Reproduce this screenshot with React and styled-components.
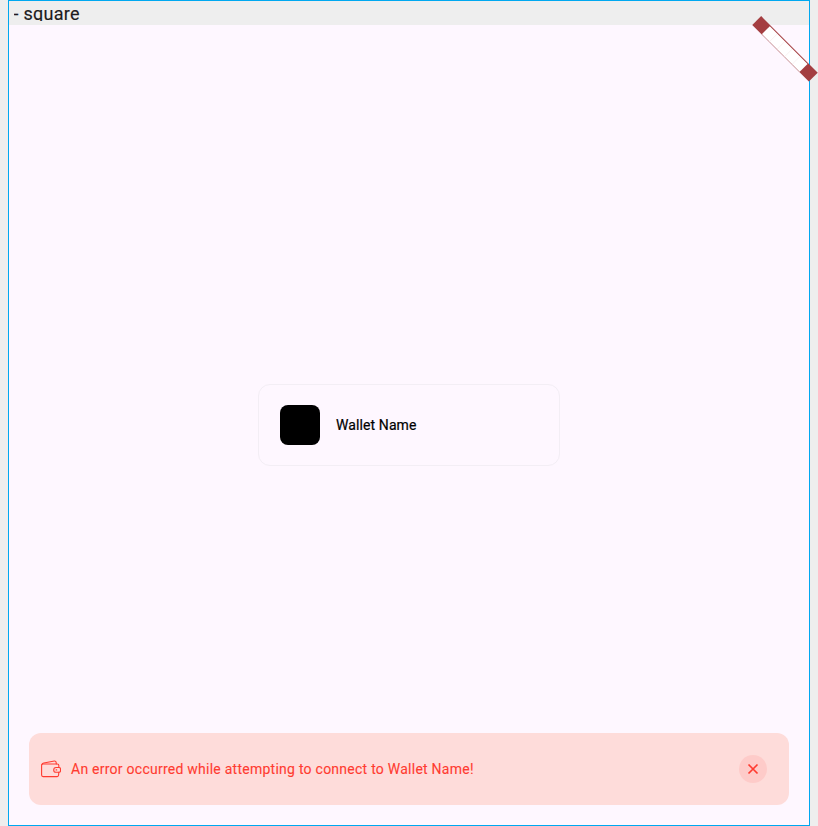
import React from "react";
import styled, { createGlobalStyle } from "styled-components";

const GlobalStyle = createGlobalStyle`
  * { box-sizing: border-box; }
  body {
    margin: 0;
    background: #eeeeee;
    font-family: Roboto, "Liberation Sans", sans-serif;
    overflow: hidden;
  }
`;

const Page = styled.div`
  width: 818px;
  height: 826px;
  padding: 0 8px;
  position: relative;
`;

const Frame = styled.main`
  width: 802px;
  height: 826px;
  border: 1px solid #00a8f0;
  display: flex;
  flex-direction: column;
`;

const Title = styled.header`
  height: 24px;
  padding-left: 4.5px;
  background: #eeeeee;
`;

const TitleText = styled.div`
  height: 20px;
  overflow: hidden;
  font-size: 18px;
  line-height: 25px;
  letter-spacing: 0.28px;
  color: #1d1b20;
  -webkit-text-stroke: 0.15px currentColor;
  white-space: pre;
`;

const Canvas = styled.section`
  flex: 1;
  display: grid;
  grid-template-rows: 359px 82px 1fr 72px 20px;
  background: #fef7ff;
`;

const WalletCard = styled.div`
  grid-row: 2;
  justify-self: center;
  width: 302px;
  padding: 0 21px;
  display: flex;
  align-items: center;
  gap: 16px;
  border: 1px solid #f3eef5;
  border-radius: 12px;
`;

const WalletLogo = styled.div`
  width: 40px;
  height: 40px;
  border-radius: 8px;
  background: #000;
`;

const WalletName = styled.span`
  font-size: 14px;
  letter-spacing: 0.1px;
  color: #000;
  -webkit-text-stroke: 0.2px currentColor;
`;

const ErrorBar = styled.div`
  grid-row: 4;
  margin: 0 20px;
  padding: 0 22px 0 12px;
  display: flex;
  align-items: center;
  border-radius: 12px;
  background: #fedcda;
  color: #ff3b30;
`;

const WalletIcon = styled.svg`
  width: 20px;
  height: 20px;
  margin-right: 10px;
`;

const ErrorText = styled.span`
  flex: 1;
  font-size: 14px;
  letter-spacing: 0.25px;
  -webkit-text-stroke: 0.1px currentColor;
`;

const CloseButton = styled.button`
  width: 28px;
  height: 28px;
  padding: 0;
  border: 0;
  border-radius: 50%;
  display: grid;
  place-items: center;
  background: #fecbc9;
  color: inherit;
`;

const Ribbon = styled.svg`
  position: absolute;
  left: 738px;
  top: 0;
  width: 80px;
  height: 90px;
`;

export default function App() {
  return (
    <>
      <GlobalStyle />
      <Page>
        <Frame>
          <Title>
            <TitleText>- square</TitleText>
          </Title>
          <Canvas>
            <WalletCard>
              <WalletLogo />
              <WalletName>Wallet Name</WalletName>
            </WalletCard>
            <ErrorBar>
              <WalletIcon viewBox="0 0 20 20" fill="none" stroke="currentColor" strokeWidth="1.1" strokeLinecap="round" strokeLinejoin="round">
                <path d="M17.8 8V6.3Q17.8 5 16.2 5H2Q.6 5 .6 6.4V16.1Q.6 17.6 2.1 17.6H16.2Q17.5 17.6 17.6 16L17.8 13.3" />
                <path d="M1 5.2Q1.5 4.3 2.8 4L13.4 2Q14.9 1.9 15.1 3.2L15.3 5" />
                <path d="M18 8.5H15.1A2.4 2.4 0 0 0 15.1 13.3H18Q19.5 13.3 19.5 11.8V10Q19.5 8.5 18 8.5Z" />
                <path d="M15.1 10.9H15.7" />
              </WalletIcon>
              <ErrorText>An error occurred while attempting to connect to Wallet Name!</ErrorText>
              <CloseButton aria-label="Close">
                <svg width="12" height="12" viewBox="0 0 12 12" fill="none" stroke="currentColor" strokeWidth="1.7">
                  <path d="M1.5 1.5L10.5 10.5M10.5 1.5L1.5 10.5" />
                </svg>
              </CloseButton>
            </ErrorBar>
          </Canvas>
        </Frame>
        <Ribbon viewBox="0 0 80 90" aria-hidden="true">
          <g transform="translate(47 48.8) rotate(45)">
            <rect x="-40" y="-6.3" width="80" height="12.6" fill="#a43e41" />
            <rect x="-26.7" y="-5.2" width="53.4" height="11.1" fill="#fff" />
            <path d="M-26.7 6H26.7" stroke="#dfc3c8" strokeWidth=".7" />
            <path d="M-16 -5V6M-5.3 -5V6M5.3 -5V6M16 -5V6" stroke="#f6e9ea" strokeWidth=".6" />
          </g>
        </Ribbon>
      </Page>
    </>
  );
}
